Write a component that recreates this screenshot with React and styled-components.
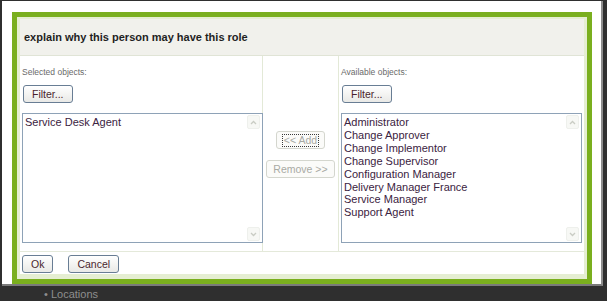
import React from "react";
import styled, { createGlobalStyle } from "styled-components";

const GlobalStyle = createGlobalStyle`
    html, body {
        margin: 0;
        padding: 0;
        background: #2f2f2f;
    }
    body {
        font-family: "Liberation Sans", Arial, sans-serif;
    }
`;

const Screen = styled.div`
    width: 607px;
    height: 301px;
    display: flex;
    flex-direction: column;
    overflow: hidden;
    background: #2f2f2f;
`;

const Window = styled.div`
    margin: 1px 4px 0 2px;
    height: 289px;
    box-sizing: border-box;
    background: #ffffff;
    border-right: 2px solid #8c8c8c;
    border-bottom: 2px solid #7a7a7a;
    padding: 11px 9px 0 10px;
`;

const Dialog = styled.div`
    height: 272px;
    box-sizing: border-box;
    border: 5px solid #7aaf1e;
    background: #e5eed2;
    padding: 2px 3px 5px 3px;
    display: flex;
    flex-direction: column;
`;

const Header = styled.div`
    height: 37px;
    box-sizing: border-box;
    background: #f1f1ec;
    border-bottom: 1px solid #e0e4d6;
    display: flex;
    align-items: center;
    padding: 0 4px;
`;

const Title = styled.h2`
    margin: 0;
    font-size: 11px;
    font-weight: bold;
    color: #1f1f1f;
`;

const Body = styled.div`
    height: 195px;
    display: grid;
    grid-template-columns: 243px 76px 1fr;
    background: #ffffff;
    border-bottom: 1px solid #e4e9da;
`;

const Column = styled.div`
    padding: 11px 0 0 2px;
    display: flex;
    flex-direction: column;
    align-items: flex-start;
    border-right: ${(p) => (p.$last ? "none" : "1px solid #e3e9d7")};
`;

const Middle = styled.div`
    padding-top: 75px;
    display: flex;
    flex-direction: column;
    align-items: center;
    gap: 11px;
    border-right: 1px solid #e3e9d7;
`;

const Label = styled.div`
    font-size: 8.5px;
    line-height: 11px;
    color: #6a6a6a;
`;

const Button = styled.button`
    height: 18px;
    padding: 0 8px;
    margin: 0;
    font-family: "Liberation Sans", Arial, sans-serif;
    font-size: 10.5px;
    color: #4a1f2e;
    background: linear-gradient(#ffffff, #e9e9e6);
    border: 1px solid #687d94;
    border-radius: 3px;
    cursor: pointer;
    margin-top: ${(p) => p.$top || 0}px;
    margin-left: ${(p) => p.$left || 0}px;
`;

const MoveButton = styled.button`
    height: 18px;
    padding: 0 ${(p) => (p.$focus ? 5 : 6)}px;
    margin: 0;
    font-family: "Liberation Sans", Arial, sans-serif;
    font-size: 10.5px;
    color: #a9aaa4;
    background: #fbfbf9;
    border: 1px solid #d4d6ce;
    border-radius: 3px;
    display: flex;
    align-items: center;
`;

const Focus = styled.span`
    border: 1px dotted #3a3a3a;
    padding: 0 1px;
    line-height: 11px;
`;

const ListBox = styled.div`
    margin-top: 10px;
    width: 241px;
    height: 130px;
    box-sizing: border-box;
    border: 1px solid #8ea2b7;
    background: #ffffff;
    display: flex;
`;

const Items = styled.ul`
    flex: 1;
    margin: 0;
    padding: 2px 0 0 2px;
    list-style: none;
`;

const Item = styled.li`
    font-size: 11px;
    line-height: 12.9px;
    color: #3b2341;
    white-space: nowrap;
`;

const Scroll = styled.div`
    width: 13px;
    margin: 1px 2px 1px 0;
    display: flex;
    flex-direction: column;
    justify-content: space-between;
`;

const Arrow = styled.div`
    height: 12px;
    display: flex;
    align-items: center;
    justify-content: center;
    border: 1px solid #eef0ec;
    background: #f7f8f5;
    border-radius: 2px;
`;

const Footer = styled.div`
    flex: 1;
    background: #ffffff;
    display: flex;
    align-items: flex-start;
    padding: 3px 0 0 2px;
    gap: 15px;
`;

const Strip = styled.div`
    flex: 1;
    padding: 2px 0 0 44px;
    font-size: 11px;
    line-height: 13px;
    color: #8e8e8e;
`;

const Chevron = ({ up }) => (
    <svg width="7" height="5" viewBox="0 0 7 5">
        <path
            d={up ? "M1 4 L3.5 1.5 L6 4" : "M1 1 L3.5 3.5 L6 1"}
            fill="none"
            stroke="#c9ccc4"
            strokeWidth="1.3"
        />
    </svg>
);

const List = ({ items }) => (
    <ListBox>
        <Items>
            {items.map((t) => <Item key={t}>{t}</Item>)}
        </Items>
        <Scroll>
            <Arrow><Chevron up /></Arrow>
            <Arrow><Chevron /></Arrow>
        </Scroll>
    </ListBox>
);

const selected = ["Service Desk Agent"];
const available = [
    "Administrator",
    "Change Approver",
    "Change Implementor",
    "Change Supervisor",
    "Configuration Manager",
    "Delivery Manager France",
    "Service Manager",
    "Support Agent",
];

const App = () => {
    return (
        <Screen>
            <GlobalStyle />
            <Window>
                <Dialog>
                    <Header>
                        <Title>explain why this person may have this role</Title>
                    </Header>
                    <Body>
                        <Column>
                            <Label>Selected objects:</Label>
                            <Button $top={7} $left={1}>Filter...</Button>
                            <List items={selected} />
                        </Column>
                        <Middle>
                            <MoveButton $focus><Focus>&lt;&lt; Add</Focus></MoveButton>
                            <MoveButton>Remove &gt;&gt;</MoveButton>
                        </Middle>
                        <Column $last>
                            <Label>Available objects:</Label>
                            <Button $top={7} $left={1}>Filter...</Button>
                            <List items={available} />
                        </Column>
                    </Body>
                    <Footer>
                        <Button>Ok</Button>
                        <Button>Cancel</Button>
                    </Footer>
                </Dialog>
            </Window>
            <Strip>• Locations</Strip>
        </Screen>
    );
};

export default App;
